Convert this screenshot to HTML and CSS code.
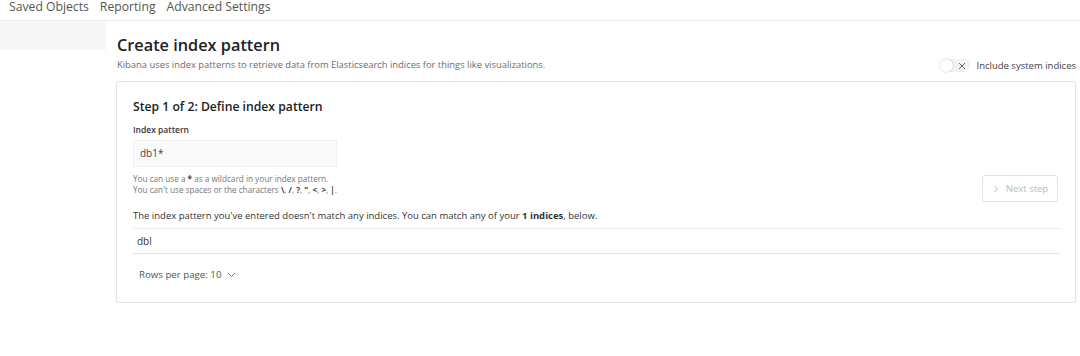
FILE: index.html
```html
<!DOCTYPE html>
<html lang="en">
<head>
    <meta charset="UTF-8">
    <title>Create index pattern</title>
    <link rel="stylesheet" href="styles.css">
</head>
<body>
    <nav class="top-nav">
        <a>Saved Objects</a>
        <a>Reporting</a>
        <a>Advanced Settings</a>
    </nav>

    <div class="layout">
        <aside class="sidebar">
            <div class="sidebar-block"></div>
        </aside>

        <main class="main">
            <div class="page-header">
                <div>
                    <h1>Create index pattern</h1>
                    <p class="subtitle">Kibana uses index patterns to retrieve data from Elasticsearch indices for things like visualizations.</p>
                </div>
                <div class="system-toggle">
                    <span class="switch">
                        <span class="knob"></span>
                        <svg class="switch-x" width="8" height="8" viewBox="0 0 8 8">
                            <path d="M1 1L7 7M7 1L1 7" stroke="#666" stroke-width="1" fill="none"/>
                        </svg>
                    </span>
                    <span>Include system indices</span>
                </div>
            </div>

            <section class="card">
                <h2>Step 1 of 2: Define index pattern</h2>

                <div class="step-row">
                    <div class="form">
                        <label class="field-label">Index pattern</label>
                        <div class="field-input">db1*</div>
                        <p class="help">You can use a <b>*</b> as a wildcard in your index pattern.<br>
                        You can't use spaces or the characters <b>\</b>, <b>/</b>, <b>?</b>, <b>"</b>, <b>&lt;</b>, <b>&gt;</b>, <b>|</b>.</p>
                    </div>
                    <button class="next-btn" disabled>
                        <svg width="8" height="8" viewBox="0 0 8 8">
                            <path d="M2.5 1L5.5 4L2.5 7" stroke="#bbb" stroke-width="1" fill="none"/>
                        </svg>
                        Next step
                    </button>
                </div>

                <p class="match-msg">The index pattern you've entered doesn't match any indices. You can match any of your <b>1 indices</b>, below.</p>

                <div class="index-table">
                    <div class="index-row">dbl</div>
                </div>

                <div class="pager">
                    Rows per page: 10
                    <svg width="9" height="6" viewBox="0 0 9 6">
                        <path d="M1 1L4.5 4.5L8 1" stroke="#777" stroke-width="1" fill="none"/>
                    </svg>
                </div>
            </section>
        </main>
    </div>
</body>
</html>
```

FILE: styles.css
```css
/* Base */
body {
    margin: 0;
    font-family: "Open Sans", "Noto Sans", sans-serif;
    color: #333;
    background: #fff;
}

/* Top navigation */
.top-nav {
    height: 20px;
    padding-left: 9px;
    border-bottom: 1px solid #ececec;
    display: flex;
    gap: 11px;
    font-size: 12.2px;
    line-height: 13px;
    color: #555;
}

/* Page layout */
.layout {
    display: flex;
}

.sidebar {
    width: 106px;
    flex-shrink: 0;
}

.sidebar-block {
    height: 29px;
    background: #f7f7f7;
}

.main {
    flex: 1;
    padding: 14px 4px 0 10px;
}

/* Header */
.page-header {
    display: flex;
    justify-content: space-between;
    align-items: flex-end;
    padding-left: 1px;
}

h1 {
    margin: 0;
    font-size: 16.3px;
    line-height: 21px;
    font-weight: 600;
    color: #222;
}

.subtitle {
    margin: 3px 0 0;
    font-size: 9.4px;
    line-height: 12px;
    color: #6d6d6d;
}

.system-toggle {
    display: flex;
    align-items: center;
    gap: 6px;
    font-size: 9.5px;
    color: #444;
    margin-bottom: -1px;
}

.switch {
    width: 30px;
    height: 13px;
    border-radius: 7px;
    background: #f2f2f2;
    display: flex;
    align-items: center;
    justify-content: flex-end;
    padding-right: 4px;
    box-sizing: border-box;
    position: relative;
}

.knob {
    position: absolute;
    left: 0;
    top: 0;
    width: 13px;
    height: 13px;
    border-radius: 50%;
    background: #fff;
    box-shadow: 0 0 2px rgba(0, 0, 0, 0.25);
}

/* Card */
.card {
    margin-top: 10px;
    border: 1px solid #e3e3e3;
    border-radius: 3px;
    box-shadow: 0 1px 2px rgba(0, 0, 0, 0.06);
    padding: 17px 15px 15px 16px;
    height: 188px;
}

h2 {
    margin: 0;
    font-size: 12.2px;
    line-height: 16px;
    font-weight: 600;
    color: #222;
}

.step-row {
    display: flex;
    justify-content: space-between;
    align-items: flex-end;
}

.form {
    margin-top: 9px;
}

.field-label {
    display: block;
    font-size: 8.5px;
    line-height: 11px;
    font-weight: 600;
    color: #333;
}

.field-input {
    margin-top: 5px;
    width: 204px;
    height: 27px;
    padding-left: 6px;
    background: #fafafa;
    border: 1px solid #f0f0f0;
    box-sizing: border-box;
    font-size: 10px;
    line-height: 25px;
    color: #444;
}

.help {
    margin: 6px 0 0;
    font-size: 8.2px;
    line-height: 11px;
    color: #777;
}

.help b {
    color: #444;
}

.next-btn {
    width: 76px;
    height: 27px;
    margin-bottom: -7px;
    border: 1px solid #e2e2e2;
    border-radius: 3px;
    background: #fff;
    color: #bbb;
    font-family: inherit;
    font-size: 9.5px;
    display: flex;
    align-items: center;
    justify-content: center;
    gap: 6px;
    margin-right: 2px;
}

.match-msg {
    margin: 14px 0 0;
    font-size: 9.5px;
    line-height: 13px;
    color: #333;
}

.match-msg b {
    font-weight: 700;
}

/* Index table */
.index-table {
    margin-top: 6px;
    border-top: 1px solid #ececec;
    border-bottom: 1px solid #e4e4e4;
}

.index-row {
    height: 24px;
    padding-left: 4px;
    font-size: 10px;
    line-height: 24px;
    color: #333;
}

.pager {
    margin-top: 14px;
    padding-left: 6px;
    display: flex;
    align-items: center;
    gap: 6px;
    font-size: 9.7px;
    color: #555;
}
```
